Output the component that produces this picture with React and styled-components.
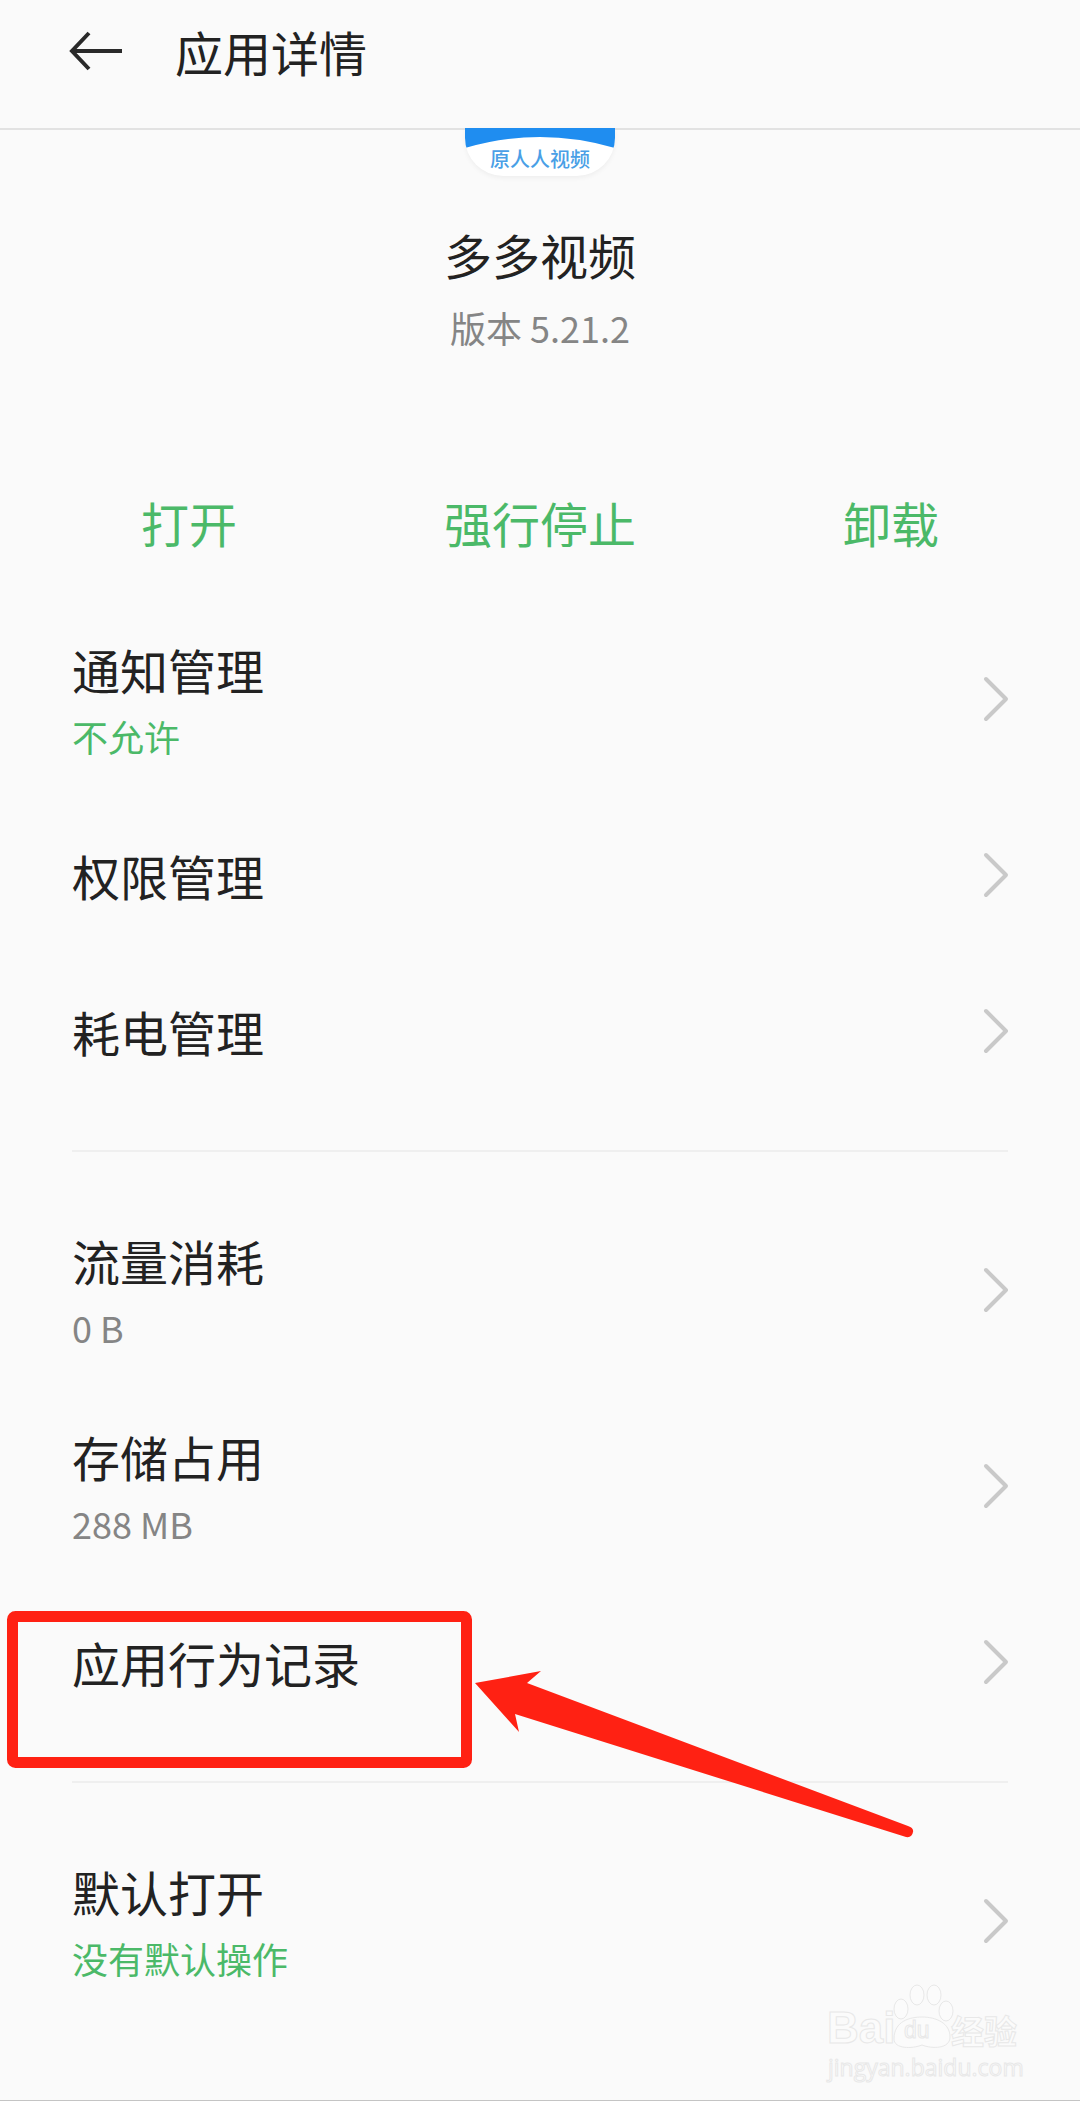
import React from 'react'
import styled, { createGlobalStyle } from 'styled-components'

const GlobalStyle = createGlobalStyle`
  html, body {
    margin: 0;
    padding: 0;
    background: #fafafa;
  }
  * {
    box-sizing: border-box;
  }
`

const Page = styled.div`
  position: relative;
  width: 1080px;
  height: 2101px;
  overflow: hidden;
  background: #fafafa;
  border-bottom: 1px solid #c4c4c4;
  font-family: "Noto Sans CJK SC", "Noto Sans", sans-serif;
  color: #222;
`

const Header = styled.header`
  display: flex;
  align-items: center;
  height: 130px;
  padding: 0 0 26px 69px;
  border-bottom: 2px solid #e2e2e2;
`

const BackIcon = styled.svg`
  width: 54px;
  height: 40px;
  margin-right: 52px;
`

const Title = styled.h1`
  margin: 0;
  font-size: 48px;
  font-weight: 400;
  line-height: 60px;
  color: #222;
`

const AppInfo = styled.section`
  display: flex;
  flex-direction: column;
  align-items: center;
`

const AppIcon = styled.div`
  width: 150px;
  height: 48px;
  border-radius: 0 0 38px 38px;
  background: #fff;
  box-shadow: 0 2px 5px rgba(0, 0, 0, 0.05);
  position: relative;
  overflow: hidden;
  display: flex;
  justify-content: center;
  padding-top: 16px;
  margin-top: -2px;
`

const IconCap = styled.svg`
  position: absolute;
  top: 0;
  left: 0;
  width: 150px;
  height: 22px;
`

const IconLabel = styled.span`
  position: relative;
  font-size: 20px;
  font-weight: 500;
  line-height: 30px;
  color: #4a9fe6;
`

const AppName = styled.div`
  margin-top: 48px;
  font-size: 48px;
  line-height: 60px;
  color: #222;
`

const Version = styled.div`
  margin-top: 18px;
  font-size: 36px;
  line-height: 50px;
  color: #858585;
`

const Actions = styled.div`
  display: grid;
  grid-template-columns: repeat(3, 351px);
  justify-content: center;
  margin-top: 140px;
`

const Action = styled.div`
  text-align: center;
  font-size: 48px;
  line-height: 60px;
  color: #4bb968;
`

const Section = styled.section`
  margin: 0 72px;
  padding: ${p => p.$first ? '49px' : '40px'} 0 ${p => p.$last ? '0' : '41px'};
  border-bottom: ${p => p.$last ? 'none' : '2px solid #efefef'};
`

const Row = styled.div`
  display: flex;
  align-items: center;
  justify-content: space-between;
  height: ${p => p.$tall ? '196px' : '156px'};
`

const RowText = styled.div`
  display: flex;
  flex-direction: column;
  gap: 12px;
  padding-top: ${p => p.$tall ? '2px' : '0'};
`

const RowTitle = styled.div`
  font-size: 48px;
  line-height: 60px;
  color: #222;
`

const RowSub = styled.div`
  font-size: 36px;
  line-height: 50px;
  color: ${p => p.$green ? '#4bb968' : '#858585'};
`

const Chevron = styled.svg`
  width: 26px;
  height: 46px;
  margin-right: -1px;
`

const Annotation = styled.svg`
  position: absolute;
  top: 0;
  left: 0;
  width: 1080px;
  height: 2101px;
  pointer-events: none;
`

const Watermark = styled.div`
  position: absolute;
  left: 826px;
  top: 1983px;
  width: 200px;
  height: 100px;
  color: #fbfbfb;
  -webkit-text-stroke: 1px #e8e8e8;
`

const MarkBrand = styled.div`
  position: absolute;
  left: 1px;
  top: 20px;
  font-family: "Liberation Sans", sans-serif;
  font-size: 44px;
  font-weight: 700;
  line-height: 50px;
`

const MarkCn = styled.div`
  position: absolute;
  left: 125px;
  top: 26px;
  font-size: 33px;
  font-weight: 700;
  line-height: 42px;
`

const MarkUrl = styled.div`
  position: absolute;
  left: 2px;
  top: 68px;
  font-family: "Open Sans", sans-serif;
  font-size: 23px;
  line-height: 32px;
  white-space: nowrap;
`

const MarkPaw = styled.svg`
  position: absolute;
  left: 62px;
  top: 0;
  width: 70px;
  height: 66px;
`

const MarkPawText = styled.span`
  position: absolute;
  left: 78px;
  top: 33px;
  font-family: "Liberation Sans", sans-serif;
  font-size: 23px;
  line-height: 28px;
`

const ChevronIcon = () => (
  <Chevron viewBox="0 0 26 46">
    <path d="M3 3 L23 23 L3 43" fill="none" stroke="#c9c9c9" strokeWidth="4" strokeLinecap="round" strokeLinejoin="round" />
  </Chevron>
)

const SettingRow = ({ title, sub, green }) => (
  <Row $tall={!!sub}>
    <RowText $tall={!!sub}>
      <RowTitle>{title}</RowTitle>
      {sub && <RowSub $green={green}>{sub}</RowSub>}
    </RowText>
    <ChevronIcon />
  </Row>
)

export default function App() {
  return (
    <Page>
      <GlobalStyle />
      <Header>
        <BackIcon viewBox="0 0 54 40">
          <path d="M20 2 L3 20 L20 38 M3 20 H53" fill="none" stroke="#2a2a2a" strokeWidth="4" />
        </BackIcon>
        <Title>应用详情</Title>
      </Header>

      <AppInfo>
        <AppIcon>
          <IconCap viewBox="0 0 150 22">
            <path d="M0 0 H150 V20 Q75 -2 0 20 Z" fill="#1f8df0" />
          </IconCap>
          <IconLabel>原人人视频</IconLabel>
        </AppIcon>
        <AppName>多多视频</AppName>
        <Version>版本 5.21.2</Version>
      </AppInfo>

      <Actions>
        <Action>打开</Action>
        <Action>强行停止</Action>
        <Action>卸载</Action>
      </Actions>

      <Section $first>
        <SettingRow title="通知管理" sub="不允许" green />
        <SettingRow title="权限管理" />
        <SettingRow title="耗电管理" />
      </Section>
      <Section>
        <SettingRow title="流量消耗" sub="0 B" />
        <SettingRow title="存储占用" sub="288 MB" />
        <SettingRow title="应用行为记录" />
      </Section>
      <Section $last>
        <SettingRow title="默认打开" sub="没有默认操作" green />
      </Section>

      <Annotation viewBox="0 0 1080 2101">
        <rect x="12.5" y="1616.5" width="454" height="146" rx="3" fill="none" stroke="#ff2113" strokeWidth="11" />
        <path d="M475 1683 L541 1671 L527 1683 L908 1826 Q914 1828 913 1832 Q912 1838 906 1837 L515 1714 L519 1732 Z" fill="#ff2113" />
      </Annotation>

      <Watermark>
        <MarkPaw viewBox="0 0 70 66">
          <ellipse cx="13" cy="26" rx="7" ry="10" fill="#fbfbfb" stroke="#e8e8e8" />
          <ellipse cx="29" cy="12" rx="7" ry="10" fill="#fbfbfb" stroke="#e8e8e8" />
          <ellipse cx="46" cy="12" rx="7" ry="10" fill="#fbfbfb" stroke="#e8e8e8" />
          <ellipse cx="58" cy="28" rx="7" ry="10" fill="#fbfbfb" stroke="#e8e8e8" />
          <path d="M6 56 C6 38 22 34 34 34 C48 34 62 40 62 54 C62 66 44 66 34 62 C24 66 6 66 6 56 Z" fill="#fbfbfb" stroke="#e8e8e8" />
        </MarkPaw>
        <MarkBrand>Bai</MarkBrand>
        <MarkPawText>du</MarkPawText>
        <MarkCn>经验</MarkCn>
        <MarkUrl>jingyan.baidu.com</MarkUrl>
      </Watermark>
    </Page>
  )
}
